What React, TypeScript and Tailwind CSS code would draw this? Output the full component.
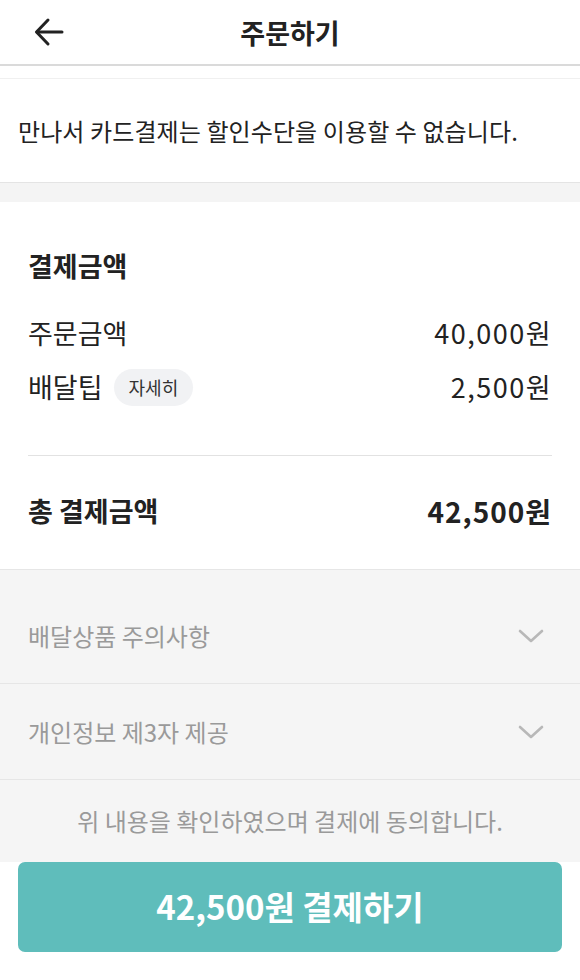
const FONT = "font-['Noto_Sans_CJK_KR','Noto_Sans',sans-serif]";

const BackArrow = () => (
  <svg width="30" height="30" viewBox="0 0 30 30" fill="none" stroke="#222" strokeWidth="3" strokeLinecap="round" strokeLinejoin="round">
    <path d="M28 15H3" />
    <path d="M14 3L2.5 15L14 27" />
  </svg>
);

const Chevron = () => (
  <svg width="26" height="14" viewBox="0 0 26 14" fill="none" stroke="#b8b8b8" strokeWidth="2.6" strokeLinecap="round" strokeLinejoin="round">
    <path d="M2 2l11 10L24 2" />
  </svg>
);

const AccordionRow = ({ label }: { label: string }) => (
  <div className="flex items-center justify-between border-b border-[#e6e6e6] pl-[28px] pr-[36px] h-[96px]">
    <span className="text-[24px] text-[#9a9a9a]">{label}</span>
    <Chevron />
  </div>
);

export default function App() {
  return (
    <div className={`${FONT} w-[580px] h-[980px] bg-white text-[#222] overflow-hidden`}>
      {/* Header */}
      <div className="grid grid-cols-[1fr_auto_1fr] items-center h-[66px] border-b-2 border-[#dadada]">
        <div className="pl-[34px] flex items-center">
          <BackArrow />
        </div>
        <h1 className="text-[27px] font-bold leading-none">주문하기</h1>
        <div />
      </div>
      <div className="h-[13px] border-b border-[#f0f0f0]" />

      {/* Notice */}
      <div className="h-[104px] flex items-center pl-[18px] border-b border-[#e4e4e4]">
        <p className="text-[24px] tracking-[0.1px]">만나서 카드결제는 할인수단을 이용할 수 없습니다.</p>
      </div>
      <div className="h-[19px] bg-[#f4f4f4]" />

      {/* Payment amount */}
      <div className="px-[28px] pt-[50px] pb-[40px] border-b border-[#e6e6e6]">
        <h2 className="text-[27px] font-bold leading-none">결제금액</h2>
        <div className="mt-[36px] flex items-center justify-between h-[36px]">
          <span className="text-[27px]">주문금액</span>
          <span className="text-[27px] tracking-[1.5px]">40,000원</span>
        </div>
        <div className="mt-[18px] flex items-center justify-between h-[36px]">
          <div className="flex items-center gap-[11px]">
            <span className="text-[27px]">배달팁</span>
            <span className="h-[37px] px-[15px] rounded-full bg-[#f1f2f4] text-[18px] text-[#333] flex items-center">자세히</span>
          </div>
          <span className="text-[27px] tracking-[1.5px]">2,500원</span>
        </div>
        <div className="mt-[50px] h-px bg-[#e2e2e2]" />
        <div className="mt-[37px] flex items-center justify-between h-[36px]">
          <span className="text-[27px] font-bold">총 결제금액</span>
          <span className="text-[28px] font-bold tracking-[1px]">42,500원</span>
        </div>
      </div>

      {/* Terms */}
      <div className="bg-[#f5f5f5] pt-[18px]">
        <AccordionRow label="배달상품 주의사항" />
        <AccordionRow label="개인정보 제3자 제공" />
        <div className="h-[82px] flex items-center justify-center">
          <p className="text-[24px] text-[#9a9a9a]">위 내용을 확인하였으며 결제에 동의합니다.</p>
        </div>
      </div>

      {/* Pay button */}
      <div className="px-[18px]">
        <button className="w-full h-[90px] rounded-[7px] bg-[#5fbdbb] text-white text-[33px] font-bold flex items-center justify-center">
          42,500원 결제하기
        </button>
      </div>
    </div>
  );
}
